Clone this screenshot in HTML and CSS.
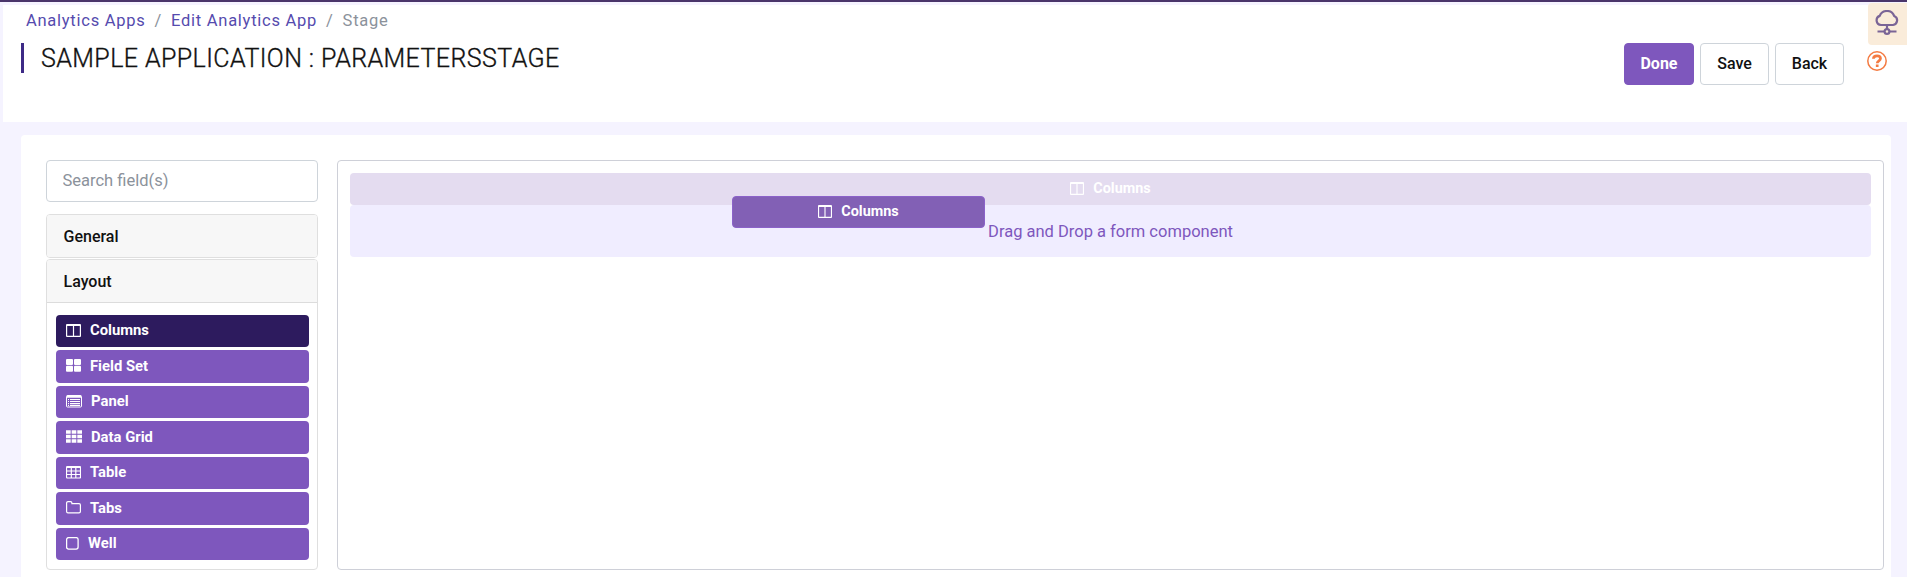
FILE: index.html
```html
<!DOCTYPE html>
<html lang="en">
<head>
<meta charset="utf-8">
<title>Edit Analytics App</title>
<link rel="stylesheet" href="styles.css">
</head>
<body>
<svg width="0" height="0" class="sprite">
  <symbol id="i-columns" viewBox="0 0 15 13" preserveAspectRatio="none"><path fill-rule="evenodd" fill="currentColor" d="M1 0h13a1 1 0 0 1 1 1v11a1 1 0 0 1-1 1H1a1 1 0 0 1-1-1V1a1 1 0 0 1 1-1zM1.200 2v9.800H6.900V2zM8.100 2v9.800h5.700V2z"/></symbol>
</svg>
<header class="header">
  <div class="heading">
    <nav class="crumbs"><a>Analytics Apps</a><i>/</i><a>Edit Analytics App</a><i>/</i><span>Stage</span></nav>
    <h1 class="title"><span>SAMPLE APPLICATION : PARAMETERSSTAGE</span></h1>
  </div>
  <div class="actions">
    <button class="btn primary">Done</button>
    <button class="btn">Save</button>
    <button class="btn">Back</button>
  </div>
  <div class="tools">
    <div class="cloud">
      <svg width="24" height="25" viewBox="0 0 24 25" fill="none" stroke="#7a6496" stroke-width="2.200"><path d="M6 15a4.700 4.700 0 0 1-1.300-9.100C6 2.700 9 1 12 1s6 1.700 7.200 5A4.700 4.700 0 0 1 18 15zM12 15v4M2.500 21.500H9m6 0h6.500"/><circle cx="12" cy="21.500" r="2.400"/></svg>
    </div>
    <div class="help">
      <svg width="20" height="20" viewBox="0 0 20 20" fill="none" stroke="#f47b42"><circle cx="10" cy="10" r="9.200" stroke-width="1.500"/><path stroke-width="2.700" d="M6.400 7.800C6.500 5.800 8 4.900 10 4.900s3.500 1 3.500 2.700c0 2.300-3.300 2.200-3.300 4.600M10.200 13.600v2.500"/></svg>
    </div>
  </div>
</header>
<main class="card">
  <aside class="side">
    <input class="search" placeholder="Search field(s)">
    <section class="group"><h2 class="group-head">General</h2></section>
    <section class="group layout">
      <h2 class="group-head">Layout</h2>
      <div class="items">
        <div class="item active"><svg width="15" height="13"><use href="#i-columns"/></svg>Columns</div>
        <div class="item"><svg width="15" height="13" fill="currentColor"><rect width="7" height="6" rx="1"/><rect x="8" width="7" height="6" rx="1"/><rect y="6.700" width="7" height="6" rx="1"/><rect x="8" y="6.700" width="7" height="6" rx="1"/></svg>Field Set</div>
        <div class="item"><svg width="16" height="13" fill="none" stroke="currentColor"><rect x=".5" y=".5" width="15" height="11.500" rx="1"/><path stroke-width="2.500" d="M1 1.500h14"/><path d="M2 4.500h1m1 0h10M2 6.500h1m1 0h10M2 8.500h1m1 0h10M2 10.300h1m1 0h10" stroke-width="1.200"/></svg>Panel</div>
        <div class="item"><svg width="16" height="13" fill="none" stroke="currentColor" stroke-width="3.500"><path stroke-dasharray="4.700 .95" d="M0 2h16M0 6.500h16M0 11h16"/></svg>Data Grid</div>
        <div class="item"><svg width="15" height="13" fill="none" stroke="currentColor" stroke-width="1.200"><rect x=".5" y=".5" width="14" height="11.500" rx="1"/><path d="M1 1.500h13M1 5h13M1 8.500h13M5.300 1v11M9.800 1v11"/></svg>Table</div>
        <div class="item"><svg width="15" height="13" fill="none" stroke="currentColor" stroke-width="1.200"><path d="M.6 2A1.400 1.400 0 0 1 2 .6h2.500A1.400 1.400 0 0 1 5.900 2v.6H13A1.400 1.400 0 0 1 14.400 4v6.500a1.400 1.400 0 0 1-1.400 1.400H2a1.400 1.400 0 0 1-1.400-1.400z"/></svg>Tabs</div>
        <div class="item"><svg width="13" height="13" fill="none" stroke="currentColor" stroke-width="1.300"><rect x=".6" y=".6" width="11.500" height="11.500" rx="2"/></svg>Well</div>
      </div>
    </section>
  </aside>
  <section class="canvas">
    <div class="ghost"><svg width="14" height="13"><use href="#i-columns"/></svg>Columns</div>
    <div class="drop">Drag and Drop a form component</div>
    <div class="dragging"><svg width="14" height="13"><use href="#i-columns"/></svg>Columns</div>
  </section>
</main>
</body>
</html>
```
FILE: styles.css
```css
* { box-sizing: border-box; }
body { margin: 0; height: 577px; overflow: hidden; background: #f5f3ff; border-top: 2px solid #4a356a; padding: 3px 0 0 3px; font: 16px/24px Roboto, sans-serif; color: #111; }
.sprite { display: none; }
.header { display: flex; height: 117px; background: #fff; }
.heading { flex: 1; padding-left: 18px; }
.crumbs { padding: 4px 0 0 5px; font-size: 16.500px; letter-spacing: .74px; color: #8b929b; white-space: nowrap; }
.crumbs a { color: #554bae; }
.crumbs i { font-style: normal; margin: 0 9px; }
.title { margin: 10px 0 0; height: 30px; border-left: 3px solid #3d2a86; padding-left: 17px; font-size: 25px; line-height: 32px; font-weight: 300; letter-spacing: .42px; white-space: nowrap; -webkit-text-stroke: .35px #111; }
.actions { display: flex; gap: 6px; padding-top: 38px; }
.btn { width: 69px; height: 42px; padding: 0 0 2px; border: 1px solid #ced4da; border-radius: 4px; background: #fff; font: 500 16px Roboto, sans-serif; color: #111; }
.primary { width: 70px; background: #7e57bd; border-color: #7e57bd; color: #fff; font-weight: 700; }
.tools { width: 63px; padding-left: 23px; }
.cloud { height: 42px; margin: -2px 0 0 1px; background: #faecda; border-radius: 4px 0 0 4px; padding: 7px 0 0 7px; }
.help { padding: 6px 0 0; }
.cloud svg, .help svg { display: block; }
.card { display: flex; gap: 19px; margin: 13px 16px 0 18px; padding: 25px 7px 0 25px; height: 450px; background: #fff; border-radius: 4px 4px 0 0; }
.side { width: 272px; }
.search { display: block; width: 100%; height: 42px; border: 1px solid #ced4da; border-radius: 4px; padding: 0 15.500px 2px; font: 16.500px Roboto, sans-serif; margin-bottom: 12px; background: #fff; }
.search::placeholder { color: #8b929b; opacity: 1; }
.group { border: 1px solid #dfdfdf; border-radius: 4px; height: 44px; margin-bottom: 1px; overflow: hidden; }
.layout { height: 311px; }
.group-head { margin: 0; height: 43px; background: #f7f7f7; border-bottom: 1px solid #dcdcdc; padding-left: 16.500px; font-size: 16px; line-height: 43px; font-weight: 500; }
.items { display: flex; flex-direction: column; gap: 3.200px; padding: 12px 8px 0 9px; }
.item, .ghost, .dragging { display: flex; align-items: center; gap: 9px; height: 32.300px; padding: 0 10px 2px; border-radius: 4px; background: #7e57bd; color: #fff; font-size: 14.800px; font-weight: 700; }
.item svg { flex: none; }
.active { background: #2d1b5e; }
.canvas { position: relative; flex: 1; height: 410px; border: 1px solid #ced0d8; border-radius: 4px; padding: 12px; }
.ghost { height: 32px; padding-bottom: 1px; justify-content: center; background: #e4dcf0; font-size: 14.400px; }
.drop { height: 52px; border-radius: 4px; background: #f0edff; color: #7e57bd; text-align: center; font-size: 16.500px; line-height: 53px; }
.dragging { position: absolute; left: 394px; top: 35px; width: 253px; height: 32px; padding-bottom: 1px; justify-content: center; background: #8260b5; border: 1px solid #8b62c9; font-size: 14.400px; }
```
